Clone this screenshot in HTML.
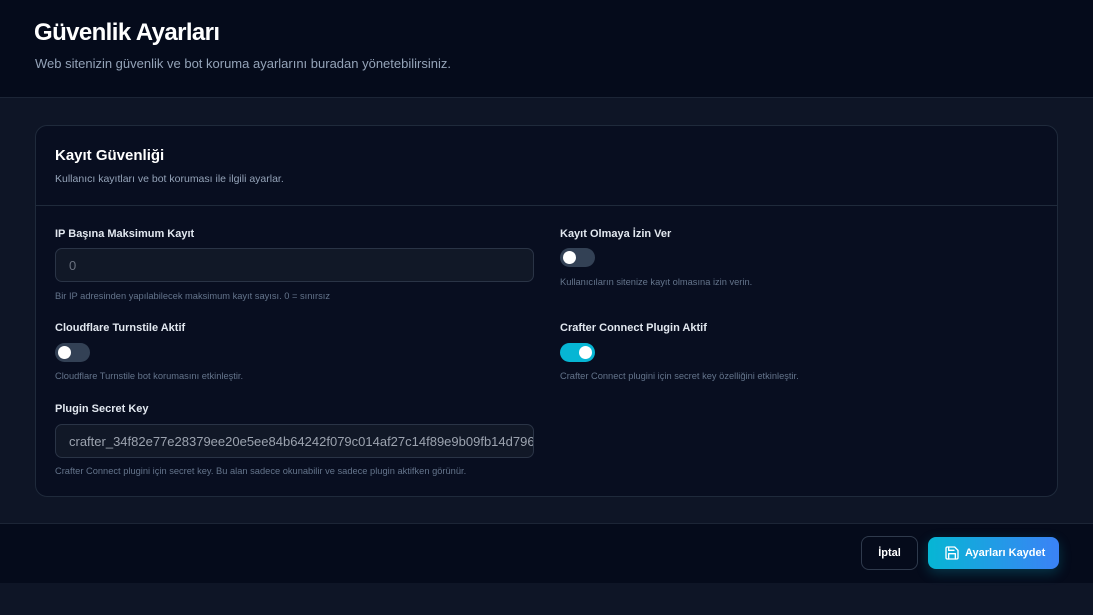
<!DOCTYPE html>
<html><head><meta charset="utf-8"><style>
*{margin:0;padding:0;box-sizing:border-box}
body{width:1093px;height:615px;background:#0e1526;font-family:"Liberation Sans",sans-serif;position:relative;overflow:hidden}
.a{position:absolute}
.hdr{left:0;top:0;width:1093px;height:98px;background:#050b1b;border-bottom:1px solid #1c2536}
h1{position:absolute;left:34px;top:19px;font-size:24px;font-weight:700;color:#fff;letter-spacing:-0.6px}
.sub{left:35px;top:56px;font-size:13px;color:#94a3b8}
.card{left:35px;top:125px;width:1023px;height:372px;background:#080e20;border:1px solid #1f2a3b;border-radius:12px}
.div{left:36px;top:205px;width:1021px;height:1px;background:#1f2a3b}
.ct{left:55px;top:147px;font-size:15px;font-weight:700;color:#fff}
.cs{left:55px;top:173px;font-size:10.5px;color:#94a3b8}
.lbl{font-size:11px;font-weight:700;color:#e2e8f0}
.hint{font-size:9.3px;color:#64748b}
.inp{background:#111827;border:1px solid #2a3446;border-radius:7px;height:34px;width:479px;color:#6b7280;font-size:13px;padding:9px 13px;overflow:hidden;white-space:nowrap}
.tg{width:35px;height:19px;border-radius:10px;background:#334155}
.tg::after{content:"";position:absolute;top:3px;left:3px;width:13px;height:13px;border-radius:50%;background:#fff}
.tg.on{background:#06b6d4}
.tg.on::after{left:19px}
.ftr{left:0;top:523px;width:1093px;height:60px;background:#050b1b;border-top:1px solid #1c2536}
.btn1{left:861px;top:536px;width:57px;height:34px;border:1px solid #2f3a4c;border-radius:8px;color:#fff;font-size:11px;font-weight:700;text-align:center;line-height:32px}
.btn2{left:928px;top:537px;width:131px;height:32px;border-radius:8px;background:linear-gradient(90deg,#06b6d4,#3b82f6);color:#fff;font-size:11px;font-weight:700;line-height:32px;padding-left:37px;box-shadow:0 4px 12px rgba(6,182,212,.25)}
</style></head><body>
<div class="a hdr"></div>
<h1>Güvenlik Ayarları</h1>
<div class="a sub">Web sitenizin güvenlik ve bot koruma ayarlarını buradan yönetebilirsiniz.</div>
<div class="a card"></div>
<div class="a div"></div>
<div class="a ct">Kayıt Güvenliği</div>
<div class="a cs">Kullanıcı kayıtları ve bot koruması ile ilgili ayarlar.</div>

<div class="a lbl" style="left:55px;top:228px">IP Başına Maksimum Kayıt</div>
<div class="a inp" style="left:55px;top:248px">0</div>
<div class="a hint" style="left:55px;top:291px">Bir IP adresinden yapılabilecek maksimum kayıt sayısı. 0 = sınırsız</div>

<div class="a lbl" style="left:560px;top:228px">Kayıt Olmaya İzin Ver</div>
<div class="a tg" style="left:560px;top:248px"></div>
<div class="a hint" style="left:560px;top:277px">Kullanıcıların sitenize kayıt olmasına izin verin.</div>

<div class="a lbl" style="left:55px;top:322px">Cloudflare Turnstile Aktif</div>
<div class="a tg" style="left:55px;top:343px"></div>
<div class="a hint" style="left:55px;top:371px">Cloudflare Turnstile bot korumasını etkinleştir.</div>

<div class="a lbl" style="left:560px;top:322px">Crafter Connect Plugin Aktif</div>
<div class="a tg on" style="left:560px;top:343px"></div>
<div class="a hint" style="left:560px;top:371px">Crafter Connect plugini için secret key özelliğini etkinleştir.</div>

<div class="a lbl" style="left:55px;top:403px">Plugin Secret Key</div>
<div class="a inp" style="left:55px;top:424px;color:#9ca3af">crafter_34f82e77e28379ee20e5ee84b64242f079c014af27c14f89e9b09fb14d796c</div>
<div class="a hint" style="left:55px;top:466px">Crafter Connect plugini için secret key. Bu alan sadece okunabilir ve sadece plugin aktifken görünür.</div>

<div class="a ftr"></div>
<div class="a btn1">İptal</div>
<div class="a btn2">Ayarları Kaydet</div>
<svg class="a" style="left:944px;top:545px" width="16" height="16" viewBox="0 0 24 24" fill="none" stroke="#fff" stroke-width="2" stroke-linecap="round" stroke-linejoin="round"><path d="M19 21H5a2 2 0 0 1-2-2V5a2 2 0 0 1 2-2h11l5 5v11a2 2 0 0 1-2 2z"/><path d="M17 21v-8H7v8"/><path d="M7 3v5h8"/></svg>
</body></html>
